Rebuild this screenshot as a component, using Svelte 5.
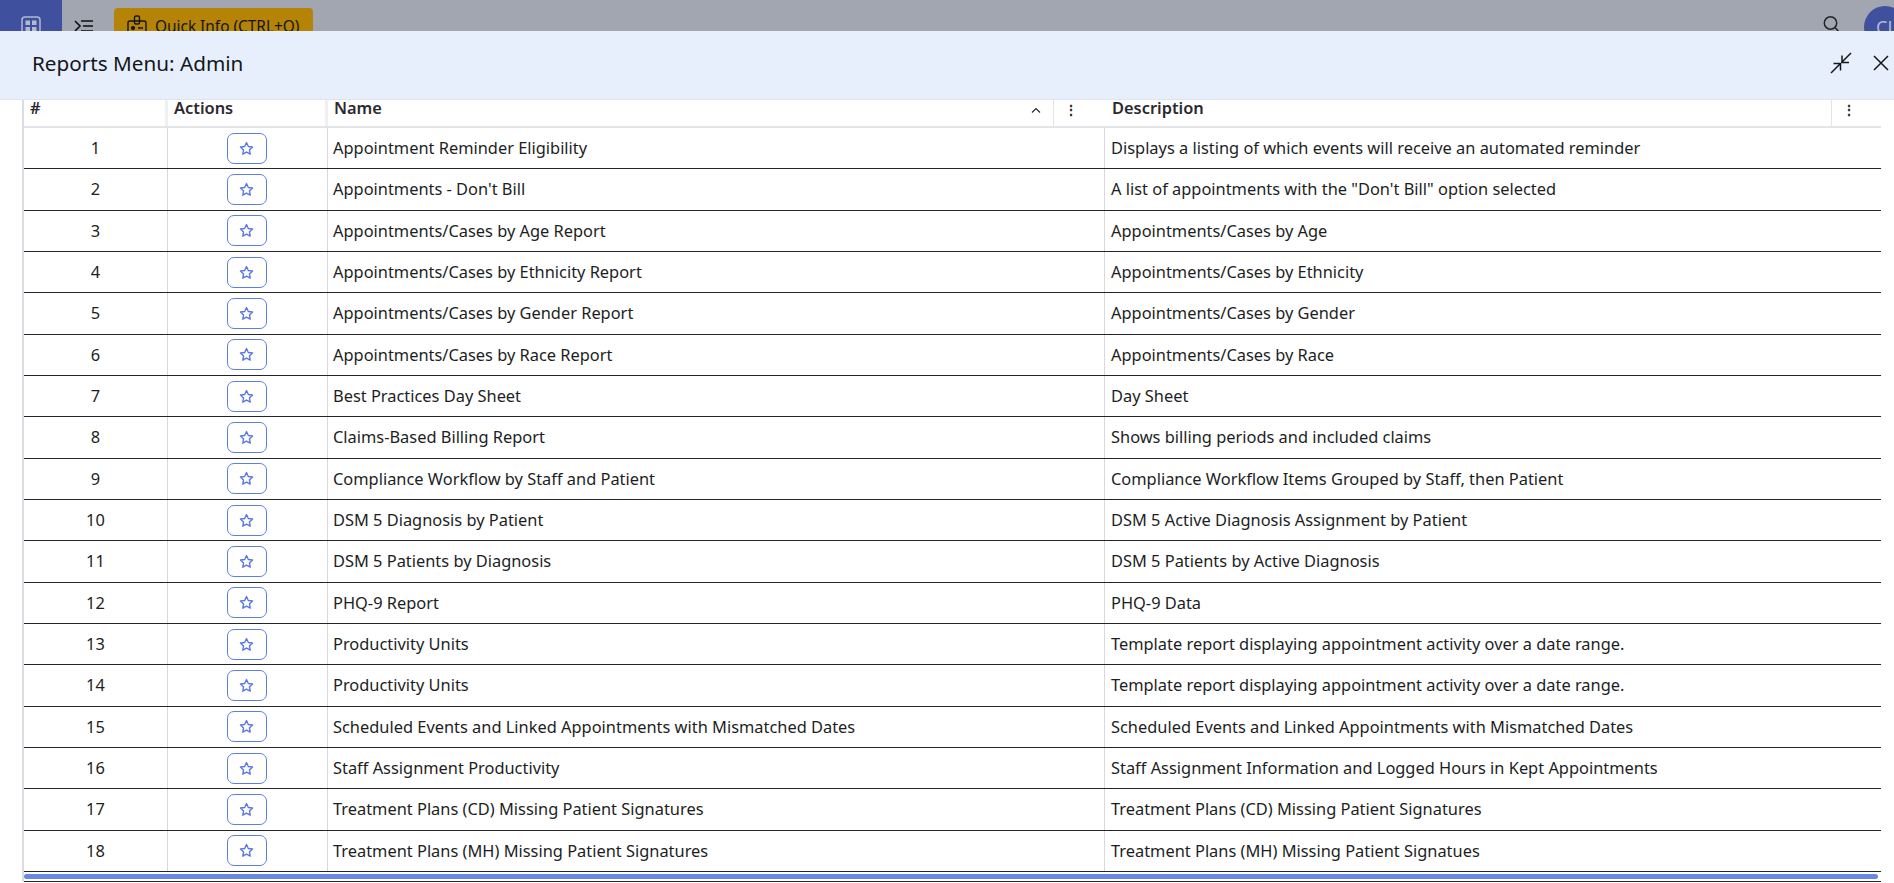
<script lang="ts">
  const reports = [
    ['Appointment Reminder Eligibility', 'Displays a listing of which events will receive an automated reminder'],
    ["Appointments - Don't Bill", 'A list of appointments with the "Don\'t Bill" option selected'],
    ['Appointments/Cases by Age Report', 'Appointments/Cases by Age'],
    ['Appointments/Cases by Ethnicity Report', 'Appointments/Cases by Ethnicity'],
    ['Appointments/Cases by Gender Report', 'Appointments/Cases by Gender'],
    ['Appointments/Cases by Race Report', 'Appointments/Cases by Race'],
    ['Best Practices Day Sheet', 'Day Sheet'],
    ['Claims-Based Billing Report', 'Shows billing periods and included claims'],
    ['Compliance Workflow by Staff and Patient', 'Compliance Workflow Items Grouped by Staff, then Patient'],
    ['DSM 5 Diagnosis by Patient', 'DSM 5 Active Diagnosis Assignment by Patient'],
    ['DSM 5 Patients by Diagnosis', 'DSM 5 Patients by Active Diagnosis'],
    ['PHQ-9 Report', 'PHQ-9 Data'],
    ['Productivity Units', 'Template report displaying appointment activity over a date range.'],
    ['Productivity Units', 'Template report displaying appointment activity over a date range.'],
    ['Scheduled Events and Linked Appointments with Mismatched Dates', 'Scheduled Events and Linked Appointments with Mismatched Dates'],
    ['Staff Assignment Productivity', 'Staff Assignment Information and Logged Hours in Kept Appointments'],
    ['Treatment Plans (CD) Missing Patient Signatures', 'Treatment Plans (CD) Missing Patient Signatures'],
    ['Treatment Plans (MH) Missing Patient Signatures', 'Treatment Plans (MH) Missing Patient Signatues']
  ];
</script>

<div class="page">
  <header class="topbar">
    <div class="brand">
      <svg width="20" height="20" viewBox="0 0 20 20" fill="none">
        <rect x="1" y="1" width="18" height="18" rx="3" stroke="#b4b9cf" stroke-width="1.5" />
        <rect x="4.5" y="4.5" width="4.5" height="4.5" fill="#b4b9cf" />
        <rect x="11" y="4.5" width="4.5" height="4.5" fill="#b4b9cf" />
        <rect x="4.5" y="11" width="4.5" height="4.5" fill="#b4b9cf" />
        <rect x="11" y="11" width="4.5" height="4.5" fill="#b4b9cf" />
      </svg>
    </div>
    <svg class="menu-icon" width="20" height="14" viewBox="0 0 20 14" fill="none" stroke="#0c0e14" stroke-width="1.6">
      <path d="M1 1l5 5-5 5M7 1h12M9 6h10M7 11h12" />
    </svg>
    <div class="quick-info">
      <svg width="20" height="24" viewBox="0 0 20 24" fill="none" stroke="#14161c" stroke-width="1.4">
        <rect x="1" y="6" width="18" height="16" rx="2" />
        <rect x="7.5" y="1" width="5" height="8" rx="1.5" />
        <circle cx="6" cy="13" r="1.4" fill="#14161c" />
        <path d="M3.5 18c1-2 4-2 5 0M11 13h5M11 17h5" />
      </svg>
      <span>Quick Info (CTRL+Q)</span>
    </div>
    <div class="top-right">
      <svg width="20" height="20" viewBox="0 0 20 20" fill="none" stroke="#23252b" stroke-width="1.5">
        <circle cx="8.5" cy="8" r="6.2" />
        <path d="M13 12.5l5 5.5" />
      </svg>
      <div class="avatar">CJ</div>
    </div>
  </header>

  <div class="modal-head">
    <h1>Reports Menu: Admin</h1>
    <div class="modal-tools">
      <svg width="22" height="22" viewBox="0 0 22 22" fill="none" stroke="#14161c" stroke-width="1.5">
        <path d="M21 1l-9.500 9.500M12 3.500V10.500h7M1 21l9.500-9.500M3.500 11.500h7v7" />
      </svg>
      <svg width="16" height="16" viewBox="0 0 16 16" fill="none" stroke="#14161c" stroke-width="1.5">
        <path d="M1 1l14 14M15 1L1 15" />
      </svg>
    </div>
  </div>

  <div class="grid-wrap">
    <div class="head-row">
      <div class="th">#</div>
      <div class="th">Actions</div>
      <div class="th name-th">
        <span>Name</span>
        <svg class="sort" width="10" height="6" viewBox="0 0 10 6" fill="none" stroke="#2a2a2a" stroke-width="1.2"><path d="M1 5.500l4-4 4 4" /></svg>
        <span class="kebab left-line">⋮</span>
      </div>
      <div class="th desc-th">
        <span>Description</span>
        <span class="kebab left-line">⋮</span>
      </div>
    </div>

    {#each reports as report, index}
      <div class="row">
        <div class="cell num">{index + 1}</div>
        <div class="cell action">
          <button class="star-btn" aria-label="Favorite">
            <svg width="15" height="15" viewBox="0 0 24 24" fill="none" stroke="#5a78e0" stroke-width="2.2" stroke-linejoin="round">
              <path d="M12 2.500l2.900 6.300 6.800.8-5 4.700 1.300 6.800-6-3.400-6 3.400 1.300-6.800-5-4.700 6.800-.8z" />
            </svg>
          </button>
        </div>
        <div class="cell">{report[0]}</div>
        <div class="cell desc">{report[1]}</div>
      </div>
    {/each}

    <div class="scroll-track"><div class="scroll-thumb"></div></div>
  </div>
</div>

<style>
  :global(body) {
    margin: 0;
    background: #fff;
    overflow: hidden;
  }

  .page {
    height: 883px;
    overflow: hidden;
    font-family: "Noto Sans", "Open Sans", sans-serif;
    color: #1c1e24;
  }

  .topbar {
    display: flex;
    align-items: flex-start;
    height: 31px;
    overflow: hidden;
    background: #a2a6b1;
  }

  .brand {
    display: flex;
    justify-content: center;
    width: 62px;
    height: 52px;
    padding-top: 16px;
    box-sizing: border-box;
    background: #3e509e;
    flex-shrink: 0;
  }

  .menu-icon {
    margin: 20px 0 0 12px;
    flex-shrink: 0;
  }

  .quick-info {
    display: flex;
    align-items: flex-start;
    gap: 8px;
    width: 199px;
    height: 40px;
    margin: 8px 0 0 20px;
    padding: 7px 0 0 13px;
    box-sizing: border-box;
    border-radius: 4px;
    background: #b58305;
    color: #14161c;
    font-size: 15.4px;
    line-height: 24px;
    white-space: nowrap;
  }

  .top-right {
    display: flex;
    align-items: flex-start;
    gap: 22px;
    margin-left: auto;
  }

  .top-right svg {
    margin-top: 15px;
  }

  .avatar {
    width: 42px;
    height: 42px;
    margin: 6px -12px 0 0;
    padding: 10px 0 0 12px;
    box-sizing: border-box;
    border-radius: 50%;
    background: #3e509e;
    color: #b4b9cf;
    font-size: 18px;
    line-height: 22px;
    overflow: hidden;
  }

  .modal-head {
    display: flex;
    align-items: center;
    justify-content: space-between;
    height: 69px;
    padding: 0 5px 4px 32px;
    box-sizing: border-box;
    background: #e8effc;
    border-bottom: 1px solid #dfe3ea;
  }

  h1 {
    margin: 0;
    font-size: 20.7px;
    font-weight: 400;
    color: #14161c;
  }

  .modal-tools {
    display: flex;
    align-items: center;
    gap: 21px;
  }

  .grid-wrap {
    width: 1859px;
    margin-left: 22px;
    border-left: 2px solid #dcdde3;
    box-sizing: border-box;
    font-size: 16.4px;
  }

  .head-row,
  .row {
    display: grid;
    grid-template-columns: 144px 160px 777px 1fr;
  }

  .head-row {
    height: 28px;
    border-bottom: 2px solid #e3e4e8;
    box-sizing: border-box;
  }

  .th {
    display: flex;
    align-items: flex-start;
    padding: 0 0 0 6px;
    border-right: 3px solid #f0f0f3;
    font-weight: 600;
    line-height: 16px;
    color: #2a2a2e;
    min-width: 0;
    box-sizing: border-box;
  }

  .name-th,
  .desc-th {
    border-right: none;
  }

  .desc-th {
    padding-left: 7px;
  }

  .kebab {
    width: 50px;
    height: 26px;
    margin-left: auto;
    padding-left: 10px;
    box-sizing: border-box;
    font-weight: 700;
    font-size: 14px;
    line-height: 20px;
  }

  .left-line {
    border-left: 1px solid #e3e4e8;
  }

  .sort {
    margin: 7px 0 0 auto;
    position: relative;
    left: -12px;
  }

  .sort + .kebab {
    margin-left: 0;
    width: 52px;
  }

  .row {
    height: 41.33px;
    border-bottom: 1.5px solid #23252b;
    box-sizing: border-box;
  }

  .cell {
    display: flex;
    align-items: center;
    padding: 0 0 0 5px;
    border-right: 1px solid #d9d9dd;
    white-space: nowrap;
    overflow: hidden;
    line-height: 20px;
    box-sizing: border-box;
  }

  .cell.desc {
    border-right: none;
    padding-left: 6px;
  }

  .num {
    justify-content: center;
    padding-left: 0;
  }

  .action {
    justify-content: center;
    padding: 0 2px 0 0;
  }

  .star-btn {
    display: flex;
    align-items: center;
    justify-content: center;
    width: 40px;
    height: 31px;
    padding: 0;
    border: 1px solid #5f7fe0;
    border-radius: 7px;
    background: #fff;
  }

  .scroll-track {
    height: 10px;
    padding: 2px 3px 0 0;
    box-sizing: border-box;
    border-bottom: 1.5px solid #23252b;
  }

  .scroll-thumb {
    height: 5px;
    border-radius: 3px;
    background: #6888e4;
  }
</style>
